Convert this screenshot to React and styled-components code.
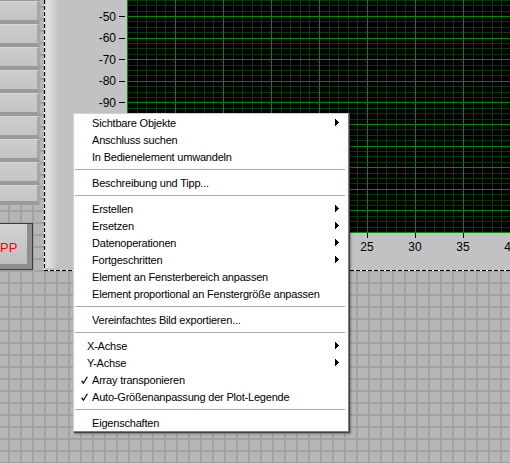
import React from 'react'
import styled, { createGlobalStyle } from 'styled-components'

const GlobalStyle = createGlobalStyle`
  html, body {
    margin: 0;
    padding: 0;
  }
  body {
    width: 510px;
    height: 463px;
    overflow: hidden;
    font-family: "Liberation Sans", Arial, sans-serif;
  }
`

// plot geometry in chart-local pixels (chart starts at page x = 57)
const PLOT_LEFT = 70
const PLOT_BOTTOM = 232
const X_UNIT = 9.6
const Y_UNIT = 2.16

const menuItems = [
  { label: 'Sichtbare Objekte', sub: true },
  { label: 'Anschluss suchen' },
  { label: 'In Bedienelement umwandeln' },
  'sep',
  { label: 'Beschreibung und Tipp...' },
  'sep',
  { label: 'Erstellen', sub: true },
  { label: 'Ersetzen', sub: true },
  { label: 'Datenoperationen', sub: true },
  { label: 'Fortgeschritten', sub: true },
  { label: 'Element an Fensterbereich anpassen' },
  { label: 'Element proportional an Fenstergröße anpassen' },
  'sep',
  { label: 'Vereinfachtes Bild exportieren...' },
  'sep',
  { label: 'X-Achse', sub: true, shift: true },
  { label: 'Y-Achse', sub: true, shift: true },
  { label: 'Array transponieren', checked: true },
  { label: 'Auto-Größenanpassung der Plot-Legende', checked: true },
  'sep',
  { label: 'Eigenschaften' },
]

const buttonHeights = [23, 23, 23, 23, 23, 23, 23, 23, 23, 20]

// only the scale labels that are not hidden behind the menu
const yLabels = [-90, -80, -70, -60, -50]
const xLabels = [25, 30, 35, 40]

function Chart() {
  const px = (v) => Math.round(v) + 0.5
  const yPos = (v) => PLOT_BOTTOM - (v + 150) * Y_UNIT
  const xPos = (v) => PLOT_LEFT + v * X_UNIT

  const verticals = []
  for (let v = 0; v <= 42; v++) {
    verticals.push({ x: px(xPos(v)), major: v % 5 === 0 })
  }
  const horizontals = []
  for (let k = 0; PLOT_BOTTOM - k * 5.4 >= -6; k++) {
    horizontals.push({ y: px(PLOT_BOTTOM - k * 5.4), major: k % 4 === 0 })
  }
  const yTicks = []
  for (let v = -150; v <= -50; v += 10) yTicks.push(v)
  const xTicks = []
  for (let v = 0; v <= 40; v += 5) xTicks.push(v)

  const lines = (major) => (
    <g stroke={major ? '#008c00' : '#0a3a0a'} strokeWidth="1">
      {verticals
        .filter((l) => l.major === major)
        .map((l) => (
          <line key={'v' + l.x} x1={l.x} y1={0} x2={l.x} y2={PLOT_BOTTOM} />
        ))}
      {horizontals
        .filter((l) => l.major === major)
        .map((l) => (
          <line key={'h' + l.y} x1={PLOT_LEFT} y1={l.y} x2={470} y2={l.y} />
        ))}
    </g>
  )

  return (
    <ChartSvg width="453" height="270" shapeRendering="crispEdges">
      <rect x={PLOT_LEFT} y={0} width={400} height={PLOT_BOTTOM} fill="#000" />
      {lines(false)}
      {lines(true)}
      <g stroke="#000">
        {yTicks.map((v) => (
          <line key={v} x1={62} y1={px(yPos(v))} x2={68} y2={px(yPos(v))} />
        ))}
        {xTicks.map((v) => (
          <line key={v} x1={px(xPos(v))} y1={233} x2={px(xPos(v))} y2={238} />
        ))}
      </g>
      <g fill="#000" fontSize="12" fontFamily='"Liberation Sans", Arial, sans-serif'>
        {yLabels.map((v) => (
          <text key={v} x={59} y={yPos(v) + 4.5} textAnchor="end">
            {v}
          </text>
        ))}
        {xLabels.map((v) => (
          <text key={v} x={xPos(v)} y={251} textAnchor="middle">
            {v}
          </text>
        ))}
      </g>
    </ChartSvg>
  )
}

function CheckMark() {
  return (
    <svg width="7" height="8" viewBox="0 0 7 8">
      <path d="M0.6 4.6 L2.4 7.2 L6.4 0.8" fill="none" stroke="#000" strokeWidth="1.2" />
    </svg>
  )
}

function SubArrow() {
  return (
    <svg width="4" height="7" viewBox="0 0 4 7" shapeRendering="crispEdges">
      <polygon points="0,0 4,3.5 0,7" fill="#000" />
    </svg>
  )
}

function ContextMenu() {
  return (
    <Menu>
      {menuItems.map((item, i) =>
        item === 'sep' ? (
          <Separator key={i} />
        ) : (
          <MenuRow key={i}>
            <Gutter>{item.checked && <CheckMark />}</Gutter>
            <Label $shift={item.shift}>{item.label}</Label>
            <ArrowSlot>{item.sub && <SubArrow />}</ArrowSlot>
          </MenuRow>
        )
      )}
    </Menu>
  )
}

export default function App() {
  return (
    <>
      <GlobalStyle />
      <Desktop>
        <TopRow>
          <ControlColumn>
            <ButtonStack>
              {buttonHeights.map((h, i) => (
                <ListButton key={i} $h={h} />
              ))}
            </ButtonStack>
            <StopButton>PP</StopButton>
          </ControlColumn>
          <FramePanel>
            <Strip />
            <ChartArea>
              <Chart />
            </ChartArea>
          </FramePanel>
        </TopRow>
        <ContextMenu />
      </Desktop>
    </>
  )
}

const Desktop = styled.div`
  position: relative;
  width: 510px;
  height: 463px;
  overflow: hidden;
  background-color: #b6b6b6;
  background-image: linear-gradient(to right, #a2a2a2 0 2px, transparent 2px),
    linear-gradient(to bottom, #a2a2a2 0 2px, transparent 2px);
  background-size: 12px 12px;
  background-position: 8px 6px;
`

const TopRow = styled.div`
  display: flex;
  height: 271px;
`

const ControlColumn = styled.div`
  width: 44px;
  flex-shrink: 0;
  display: flex;
  flex-direction: column;
`

const ButtonStack = styled.div`
  display: flex;
  flex-direction: column;
  margin-top: -22px;
`

const ListButton = styled.div`
  box-sizing: border-box;
  width: 40px;
  height: ${(p) => p.$h}px;
  background: linear-gradient(#cdcdcd, #c4c4c4);
  border-top: 1px solid #d6d6d6;
  border-right: 3px solid #a6a6a6;
  border-bottom: 4px solid #9a9a9a;
`

const StopButton = styled.div`
  box-sizing: border-box;
  margin-top: 18px;
  width: 33px;
  height: 47px;
  display: flex;
  align-items: center;
  padding-top: 2px;
  border-top: 1px solid #3c3c3c;
  border-right: 1px solid #3c3c3c;
  border-bottom: 1px solid #3c3c3c;
  background: linear-gradient(#d2d2d2, #bdbdbd);
  box-shadow: inset -6px -6px 0 -1px #8e8e8e, inset -3px -3px 0 0 #6a6a6a;
  color: #ff0000;
  font-size: 13px;
  line-height: 1;
`

const FramePanel = styled.div`
  flex: 1;
  display: flex;
  padding: 0 0 1px 1px;
  background: repeating-linear-gradient(to bottom, #000 0 4px, #fff 4px 6px) left top / 1px 100% no-repeat,
    repeating-linear-gradient(to right, #000 0 4px, #fff 4px 6px) left bottom / 100% 1px no-repeat,
    #c2c2c2;
  background-origin: border-box;
`

const Strip = styled.div`
  width: 12px;
  flex-shrink: 0;
  margin-bottom: 2px;
  background: linear-gradient(to right, #cfcfcf 0, #e2e2e2 20%, #d6d6d6 60%, #c6c6c6 100%);
`

const ChartArea = styled.div`
  flex: 1;
  overflow: visible;
`

const ChartSvg = styled.svg`
  display: block;
  overflow: visible;
`

const Menu = styled.div`
  position: absolute;
  left: 73px;
  top: 113px;
  width: 276px;
  box-sizing: border-box;
  background: #fff;
  border-top: 1px solid #d4d0c8;
  border-left: 1px solid #d4d0c8;
  border-right: 1px solid #808080;
  border-bottom: 1px solid #808080;
  box-shadow: 1px 1px 0 #404040, 2px 2px 2px rgba(0, 0, 0, 0.35);
  font-family: "Liberation Sans", Arial, sans-serif;
  font-size: 11px;
  letter-spacing: -0.2px;
  color: #000;
`

const MenuRow = styled.div`
  display: grid;
  grid-template-columns: 18px 1fr auto;
  align-items: center;
  height: 17px;
  padding-right: 9px;
  white-space: nowrap;
`

const Gutter = styled.div`
  display: flex;
  align-items: center;
  padding-left: 7px;
`

const Label = styled.span`
  margin-left: ${(p) => (p.$shift ? -5 : 0)}px;
`

const ArrowSlot = styled.div`
  display: flex;
  align-items: center;
`

const Separator = styled.div`
  height: 1px;
  margin: 4px 3px 4px 1px;
  background: #a8a8a8;
`
